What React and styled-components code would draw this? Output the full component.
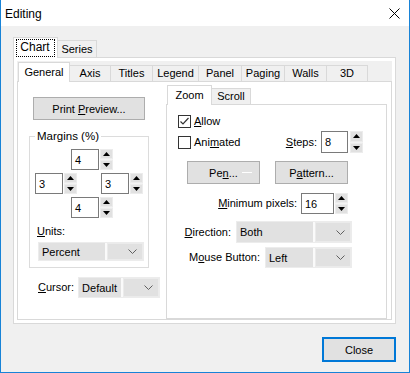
import React from 'react'
import styled, { createGlobalStyle } from 'styled-components'

const GlobalStyle = createGlobalStyle`
  html, body { margin: 0; padding: 0; background: #fff; }
  body {
    font-family: "Liberation Sans", Arial, sans-serif;
    font-size: 11px;
    color: #000;
  }
  * { box-sizing: border-box; }
`

const Window = styled.div`
  width: 410px;
  height: 373px;
  border: 1px solid #1883d7;
  border-top: none;
  display: flex;
  flex-direction: column;
  background: #f0f0f0;
`

const TitleBar = styled.div`
  height: 26px;
  flex: none;
  background: #fff;
  display: flex;
  align-items: center;
  justify-content: space-between;
  padding: 1px 9px 0 4px;
  font-size: 12px;
`

const Body = styled.div`
  flex: 1;
  display: flex;
  flex-direction: column;
  padding: 12px 13px 0 12px;
`

const TabRow = styled.div`
  display: flex;
  align-items: flex-end;
  height: ${p => p.$h}px;
  margin-left: ${p => p.$indent || 0}px;
  margin-top: ${p => p.$top || 0}px;
  margin-bottom: -1px;
  position: relative;
  z-index: 1;
`

const Tab = styled.div`
  width: ${p => p.$w}px;
  height: ${p => (p.$active ? p.$h + 1 : p.$h - 3)}px;
  margin-bottom: ${p => (p.$active ? 0 : 1)}px;
  margin-left: -1px;
  &:first-child { margin-left: 0; }
  border: 1px solid #d9d9d9;
  border-bottom: none;
  background: ${p => (p.$active ? '#fff' : '#f0f0f0')};
  position: relative;
  z-index: ${p => (p.$active ? 2 : 1)};
  display: flex;
  align-items: ${p => (p.$active ? 'flex-start' : 'center')};
  justify-content: center;
  padding-top: ${p => (p.$active ? 3 : 0)}px;
  line-height: 13px;
  white-space: nowrap;
`

const FocusText = styled.span`
  outline: 1px dotted #000;
  outline-offset: 0;
  padding: 1px 4px 2px 3px;
  margin-top: -1px;
  font-size: 12px;
`

const OuterPanel = styled.div`
  flex: none;
  height: 267px;
  border: 1px solid #d9d9d9;
  background: #fff;
  padding: 3px;
  display: flex;
`

const Sheet = styled.div`
  flex: 1;
  background: #f0f0f0;
  display: flex;
  flex-direction: column;
`

const PagePanel = styled.div`
  flex: 1;
  border: 1px solid #d9d9d9;
  background: #fff;
  display: grid;
  grid-template-columns: 148px 221px;
  align-content: start;
  padding-top: 3px;
`

const LeftCol = styled.div`
  display: flex;
  flex-direction: column;
  align-items: flex-start;
`

const Button = styled.div`
  width: ${p => p.$w}px;
  height: ${p => p.$h || 23}px;
  background: #e1e1e1;
  border: ${p => (p.$default ? '2px solid #0078d7' : '1px solid #adadad')};
  display: flex;
  align-items: center;
  justify-content: center;
  white-space: nowrap;
`

const PenLine = styled.span`
  width: 10px;
  height: 1px;
  background: #fff;
  margin: 0 -14px 0 4px;
`

const PrintButton = styled(Button)`
  margin: 12px 0 0 15px;
`

const GroupBox = styled.fieldset`
  margin: 10px 0 0 11px;
  width: 120px;
  padding: 0 0 6px;
  min-width: 0;
  border: 1px solid #dcdcdc;
  display: flex;
  flex-direction: column;
`

const Legend = styled.legend`
  margin-left: 5px;
  padding: 0 2px;
  line-height: 13px;
  font-size: 11.5px;
`

const SpinRow = styled.div`
  display: flex;
  justify-content: ${p => (p.$split ? 'space-between' : 'flex-start')};
  padding: 0 5px 0 ${p => p.$left}px;
  margin-top: ${p => p.$top}px;
`

const SpinWrap = styled.div`
  display: flex;
  gap: ${p => p.$gap ?? 1}px;
  flex: none;
`

const SpinEdit = styled.div`
  width: ${p => p.$w}px;
  height: ${p => p.$h || 21}px;
  border: 1px solid #7a7a7a;
  background: #fff;
  padding: 0 3px;
  display: flex;
  align-items: center;
`

const SpinButtons = styled.div`
  width: 13px;
  display: flex;
  flex-direction: column;
  gap: 1px;
  background: #f3f3f3;
`

const SpinBtn = styled.div`
  flex: 1;
  background: #e1e1e1;
  border: 1px solid #ececec;
  display: flex;
  align-items: center;
  justify-content: center;
`

const FieldLabel = styled.div`
  line-height: 13px;
  margin: ${p => p.$m || 0};
  white-space: nowrap;
`

const Combo = styled.div`
  width: ${p => p.$w}px;
  height: ${p => p.$h || 21}px;
  border: 1px solid #ececec;
  background: #fafafa;
  display: flex;
  gap: 2px;
  margin: ${p => p.$m || 0};
  flex: none;
`

const ComboText = styled.div`
  flex: 1;
  background: #e1e1e1;
  padding-left: 3px;
  display: flex;
  align-items: center;
`

const ComboArrow = styled.div`
  width: 36px;
  background: #e1e1e1;
  border: 1px solid #ebebeb;
  display: flex;
  align-items: center;
  justify-content: flex-end;
  padding-right: 5px;
`

const InlineRow = styled.div`
  display: flex;
  align-items: center;
  gap: ${p => p.$gap || 4}px;
  margin-top: ${p => p.$top || 0}px;
  padding-left: ${p => p.$left || 0}px;
  padding-right: ${p => p.$right || 0}px;
  justify-content: ${p => (p.$end ? 'flex-end' : 'flex-start')};
`

const SubControl = styled.div`
  display: flex;
  flex-direction: column;
  height: 234px;
`

const SubPanel = styled.div`
  flex: 1;
  border: 1px solid #d9d9d9;
  background: #fff;
  display: flex;
  flex-direction: column;
`

const CheckBox = styled.div`
  width: 13px;
  height: 13px;
  border: 1px solid #333;
  background: #fff;
  display: flex;
  align-items: center;
  justify-content: center;
  flex: none;
`

const Spacer = styled.div`
  flex: 1;
`

const Footer = styled.div`
  display: flex;
  justify-content: flex-end;
  margin-top: 13px;
`

const U = styled.u`
  text-underline-offset: 1px;
`

const UpArrow = () => (
  <svg width="7" height="4" viewBox="0 0 7 4"><polygon points="0,4 7,4 3.5,0" fill="#000" /></svg>
)
const DownArrow = () => (
  <svg width="7" height="4" viewBox="0 0 7 4"><polygon points="0,0 7,0 3.5,4" fill="#000" /></svg>
)
const Chevron = () => (
  <svg width="9" height="5" viewBox="0 0 9 5">
    <polyline points="0.5,0.5 4.5,4.5 8.5,0.5" fill="none" stroke="#606060" strokeWidth="1" />
  </svg>
)

const Spin = ({ value, w, gap, h }) => (
  <SpinWrap $gap={gap}>
    <SpinEdit $w={w} $h={h}>{value}</SpinEdit>
    <SpinButtons>
      <SpinBtn><UpArrow /></SpinBtn>
      <SpinBtn><DownArrow /></SpinBtn>
    </SpinButtons>
  </SpinWrap>
)

const Select = ({ value, w, h, m }) => (
  <Combo $w={w} $h={h} $m={m}>
    <ComboText>{value}</ComboText>
    <ComboArrow><Chevron /></ComboArrow>
  </Combo>
)

const Check = ({ checked }) => (
  <CheckBox>
    {checked && (
      <svg width="11" height="11" viewBox="0 0 11 11">
        <polyline points="1.5,5.5 4,8 9.5,2" fill="none" stroke="#333" strokeWidth="1.2" />
      </svg>
    )}
  </CheckBox>
)

const innerTabs = [
  ['General', 52],
  ['Axis', 42],
  ['Titles', 43],
  ['Legend', 47],
  ['Panel', 44],
  ['Paging', 44],
  ['Walls', 43],
  ['3D', 42],
]

export default function App() {
  return (
    <>
      <GlobalStyle />
      <Window>
        <TitleBar>
          <span>Editing</span>
          <svg width="11" height="11" viewBox="0 0 11 11">
            <path d="M0.5 0.5 L10.5 10.5 M10.5 0.5 L0.5 10.5" stroke="#000" strokeWidth="1" />
          </svg>
        </TitleBar>
        <Body>
          <TabRow $h={20}>
            <Tab $w={45} $h={20} $active><FocusText>Chart</FocusText></Tab>
            <Tab $w={40} $h={20}>Series</Tab>
          </TabRow>
          <OuterPanel>
            <Sheet>
              <TabRow $h={20} $indent={1} $top={1}>
                {innerTabs.map(([name, w], i) => (
                  <Tab key={name} $w={w} $h={19} $active={i === 0}>{name}</Tab>
                ))}
              </TabRow>
              <PagePanel>
                <LeftCol>
                  <PrintButton $w={112}><span>Print <U>P</U>review...</span></PrintButton>
                  <GroupBox>
                    <Legend>Margins (%)</Legend>
                    <SpinRow $left={41} $top={6}><Spin value="4" w={28} /></SpinRow>
                    <SpinRow $left={5} $top={3} $split>
                      <Spin value="3" w={28} />
                      <Spin value="3" w={28} />
                    </SpinRow>
                    <SpinRow $left={41} $top={3}><Spin value="4" w={28} /></SpinRow>
                    <FieldLabel $m="7px 0 0 7px"><U>U</U>nits:</FieldLabel>
                    <Select value="Percent" w={106} h={19} m="4px 0 0 8px" />
                  </GroupBox>
                  <InlineRow $top={9} $left={20} $gap={4}>
                    <FieldLabel><U>C</U>ursor:</FieldLabel>
                    <Select value="Default" w={82} />
                  </InlineRow>
                </LeftCol>
                <SubControl>
                  <TabRow $h={20} $indent={1}>
                    <Tab $w={45} $h={19} $active>Zoom</Tab>
                    <Tab $w={40} $h={19}>Scroll</Tab>
                  </TabRow>
                  <SubPanel>
                    <InlineRow $top={10} $left={11} $gap={3}>
                      <Check checked />
                      <FieldLabel><U>A</U>llow</FieldLabel>
                    </InlineRow>
                    <InlineRow $top={3} $left={11} $right={23} $gap={3}>
                      <Check />
                      <FieldLabel>Ani<U>m</U>ated</FieldLabel>
                      <Spacer />
                      <FieldLabel style={{ marginRight: 1 }}><U>S</U>teps:</FieldLabel>
                      <Spin value="8" w={27} gap={2} h={22} />
                    </InlineRow>
                    <InlineRow $top={8} $left={20} $gap={15}>
                      <Button $w={73}><span>Pe<U>n</U>...</span><PenLine /></Button>
                      <Button $w={73}><span>P<U>a</U>ttern...</span></Button>
                    </InlineRow>
                    <InlineRow $top={9} $right={38} $end $gap={4}>
                      <FieldLabel><U>M</U>inimum pixels:</FieldLabel>
                      <Spin value="16" w={33} />
                    </InlineRow>
                    <InlineRow $top={7} $right={34} $end $gap={5}>
                      <FieldLabel><U>D</U>irection:</FieldLabel>
                      <Select value="Both" w={116} h={22} />
                    </InlineRow>
                    <InlineRow $top={4} $right={34} $end $gap={5}>
                      <FieldLabel>M<U>o</U>use Button:</FieldLabel>
                      <Select value="Left" w={87} />
                    </InlineRow>
                  </SubPanel>
                </SubControl>
              </PagePanel>
            </Sheet>
          </OuterPanel>
          <Footer>
            <Button $w={74} $h={25} $default>Close</Button>
          </Footer>
        </Body>
      </Window>
    </>
  )
}
